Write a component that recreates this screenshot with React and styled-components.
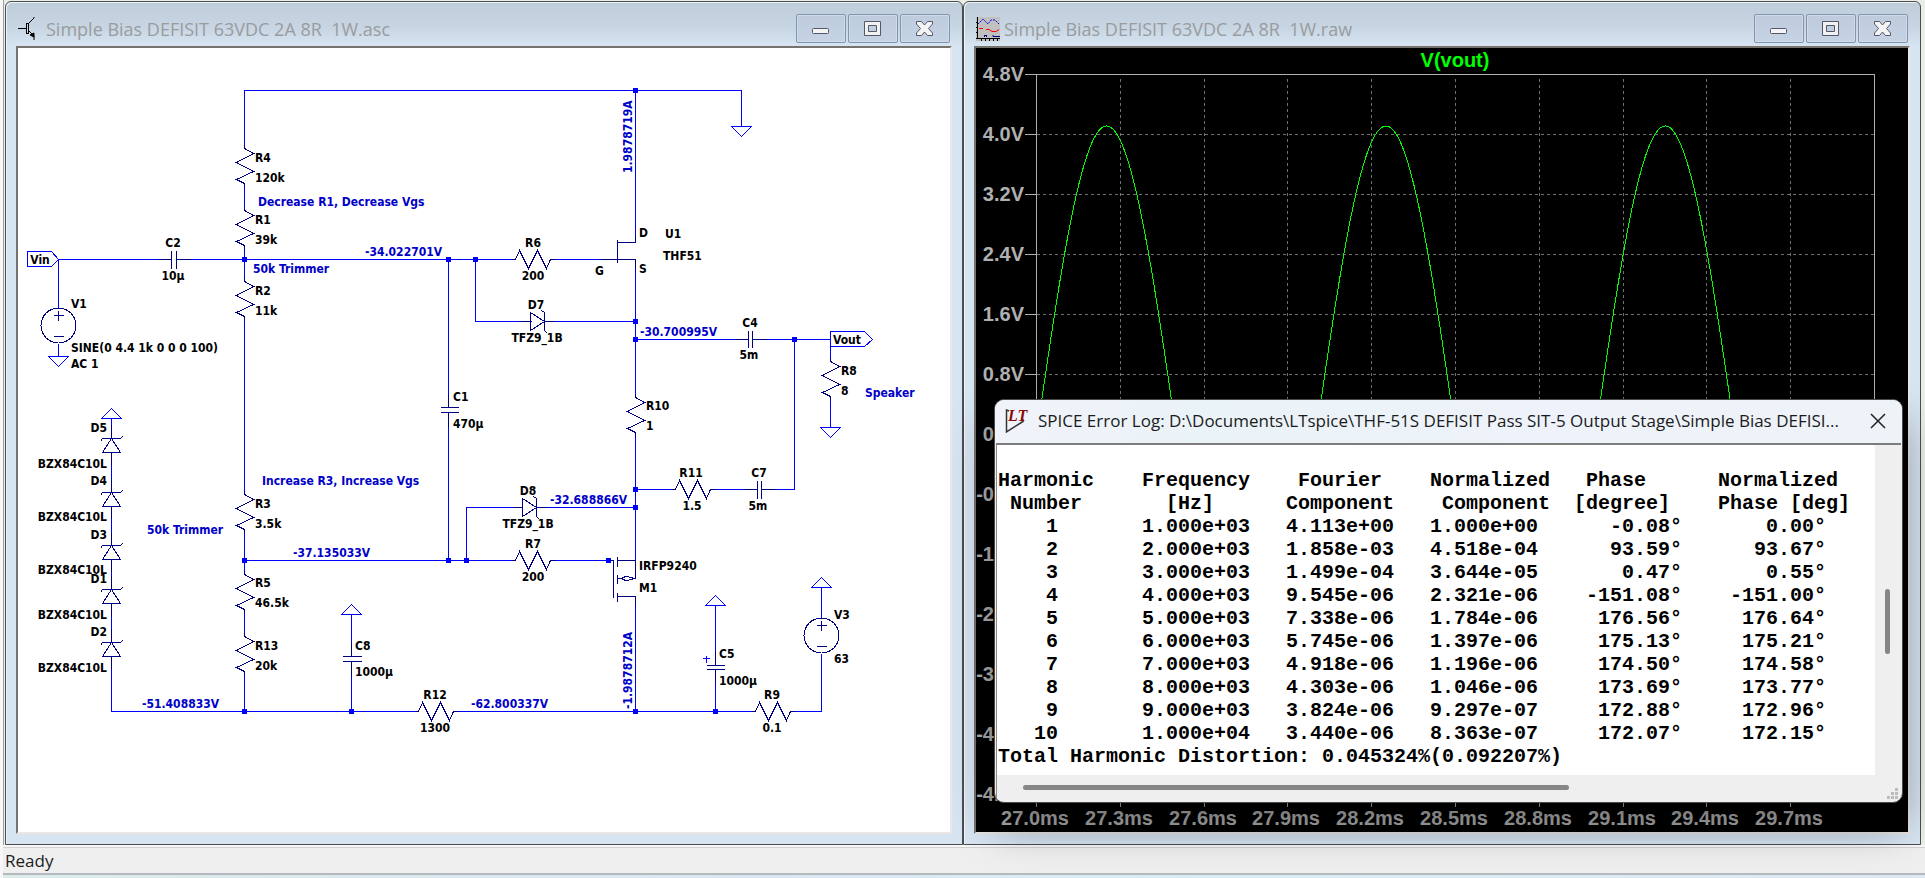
import React from "react"
import styled, { createGlobalStyle } from "styled-components"

const GlobalStyle = createGlobalStyle`
  * {
    box-sizing: border-box;
  }

  body {
    margin: 0;
    background-color: #f4f4f2;
    font-family: "Open Sans", "Noto Sans", sans-serif;
  }
`

/* ---------- shell ---------- */

const Shell = styled.div`
  position: relative;
  display: flex;
  flex-direction: column;
  min-height: 100vh;
  overflow: hidden;
  background-color: #f7f7f7;
`

const Desktop = styled.main`
  flex: 1;
  display: grid;
  grid-template-columns: 1fr 1fr;
  margin: 0 0 2px 3px;
  padding: 1px 4px 0 1px;
  border-left: 1px solid #a0a0a0;
  background-color: #e9efe6;
`

const StatusBar = styled.footer`
  display: flex;
  align-items: center;
  height: 28px;
  margin-left: 3px;
  padding-left: 2px;
  border-top: 1px solid #d2d2d2;
  border-bottom: 2px solid #b2bac0;
  background-color: #efefef;
  color: #1c1c1c;
  font-size: 17px;
  line-height: 24px;
`

const BottomStrip = styled.div`
  height: 3px;
  margin-left: 3px;
  background: linear-gradient(90deg, #dcebea, #dce6f2 40%, #d9edf4 60%, #dfe7f1);
`

/* ---------- child windows ---------- */

const Frame = styled.section`
  display: flex;
  flex-direction: column;
  min-width: 0;
  padding: 0 10px 10px;
  border: 1px solid #4b4d50;
  border-radius: 6px 6px 0 0;
  box-shadow: inset 1px 1px 0 #eef3f8;
  background: linear-gradient(#bfccda, #c8d5e2 26px, #d7e4f2 44px);
`

const TitleBar = styled.header`
  display: flex;
  align-items: center;
  gap: 4px;
  height: 44px;
  padding: 9px 2px 0;
`

const Title = styled.h2`
  flex: 1;
  min-width: 0;
  margin: 0;
  overflow: hidden;
  color: #999c9f;
  font-size: 18px;
  font-weight: 400;
  line-height: 24px;
  white-space: pre;
`

const Buttons = styled.div`
  display: flex;
  gap: 2px;
`

const FrameButton = styled.button`
  display: flex;
  align-items: center;
  justify-content: center;
  width: 50px;
  height: 29px;
  padding: 0;
  border: 1px solid #8494b0;
  border-radius: 2px;
  box-shadow: inset 0 0 0 1px #cfdaea;
  background: linear-gradient(#bdcbdd, #c6d3e4);
`

const Client = styled.div`
  flex: 1;
  border: 2px solid;
  border-color: #76736f #ebe7e7 #ebe7e7 #76736f;
  background-color: ${({ $dark }) => ($dark ? "black" : "white")};

  > svg {
    display: block;
    width: 100%;
    height: auto;
  }
`

const Glyph = styled.svg`
  flex: none;
  display: block;
  overflow: visible;
`

function Window({ title, icon, dark, children }) {
  return (
    <Frame>
      <TitleBar>
        {icon}
        <Title>{title}</Title>
        <Buttons>
          <FrameButton type="button" aria-label="Minimize">
            <Glyph width="20" height="18">
              <g transform="translate(-.5 -.5)">
                <rect x="2" y="9" width="16" height="5" rx="1" fill="#f4f4f4" stroke="#555868" />
              </g>
            </Glyph>
          </FrameButton>
          <FrameButton type="button" aria-label="Maximize">
            <Glyph width="20" height="18">
              <g transform="translate(-.5 -.5)">
                <path
                  d="M2 2h16v14H2zM6 6v6h8V6z"
                  fill="#f1f1f1"
                  fillRule="evenodd"
                  stroke="#555868"
                />
              </g>
            </Glyph>
          </FrameButton>
          <FrameButton type="button" aria-label="Close">
            <Glyph width="20" height="18">
              <g transform="translate(-.5 -.5)">
                <path
                  d="M2 2h5l3 3.500l3-3.500h5v2.500l-4 4.500l4 4.500v2.500h-5l-3-3.500l-3 3.500h-5v-2.500l4-4.500l-4-4.500z"
                  fill="#f4f4f4"
                  stroke="#555868"
                  strokeLinejoin="round"
                />
              </g>
            </Glyph>
          </FrameButton>
        </Buttons>
      </TitleBar>
      <Client $dark={dark}>{children}</Client>
    </Frame>
  )
}

const SchematicIcon = () => (
  <Glyph width="24" height="24" fill="none" stroke="black">
    <path d="M0 11.500h8" />
    <path d="M8.500 6v11M10.500 6v11M8 6.500h3M8 16.500h3" />
    <path d="M11 6l5-5v-1M11 14l5 5v4" />
    <path d="M12 18l4-2v4z" fill="black" />
  </Glyph>
)

const WaveformIcon = () => (
  <Glyph width="24" height="24" fill="none">
    <rect width="24" height="24" fill="#c0c0c0" />
    <path d="M2 7l5-5l5 5l3-4h4l4 4" stroke="#0000e0" strokeDasharray="2 1" />
    <path d="M3 11.500h4M10 12.500h3l3 2h4l3-2" stroke="red" />
    <path d="M8 18.500h3M8.500 18v2M10.500 18v2M17 18v1.500h7" stroke="#000080" />
    <path d="M1.500 0v22M0 21.500h24M0 5.500h2M0 10.500h2M0 15.500h2" stroke="black" />
    <path d="M5.500 21v3M9.500 21v3M13.500 21v3M17.500 21v3M21.500 21v3" stroke="black" />
  </Glyph>
)

/* ---------- schematic ---------- */

const WIRE = "#0000ff"
const PART = "#000080"

const Label = styled.text`
  font-family: "DejaVu Sans Condensed", "DejaVu Sans", sans-serif;
  font-size: 12px;
  font-weight: 700;
  fill: ${({ $note }) => ($note ? "#0000c8" : "black")};
`

const WIRES = [
  "M244 145V90H741V126",
  "M635 90V240",
  "M244 183V210M244 245V281M244 316V494M244 529V574M244 609V636M244 671V711",
  "M58 259H171M176 259H515M551 259H610",
  "M58 259V307M58 343V356",
  "M448 259V407M448 412V560",
  "M475 259V321H531M544 321H635",
  "M635 264V397M635 432V560",
  "M635 339H748M752 339H830V361M830 396V427",
  "M794 339V489H761M757 489H711M675 489H635",
  "M466 560V507H522M536 507H635",
  "M244 560H515M551 560H608",
  "M635 601V711",
  "M111 418V438M111 452V492M111 505V545M111 558V589M111 602V642M111 656V711H418",
  "M454 711H755M791 711H821V653M821 618V587",
  "M351 711V661M351 656V614",
  "M715 711V669M715 665V605",
  "M27 251H51L58 259L51 266H27Z",
  "M830 331H864L872 339L864 346H830Z",
]

const NODES = [
  [635, 90], [244, 259], [448, 259], [475, 259], [635, 321], [635, 339], [794, 339],
  [635, 489], [635, 507], [244, 560], [448, 560], [466, 560], [608, 560],
  [244, 711], [351, 711], [635, 711], [715, 711],
]

const RESISTORS = [
  [244, 144], [244, 206], [244, 277], [244, 490], [244, 570], [244, 632],
  [635, 393], [830, 357],
]

const FLAT_RESISTORS = [[515, 259], [515, 560], [675, 489], [418, 711], [755, 711]]

const GROUNDS_DOWN = [[741, 126], [58, 356], [830, 427]]
const GROUNDS_UP = [[111, 418], [351, 614], [715, 605], [821, 587]]

const ZENERS = [438, 492, 545, 589, 642]
const FLAT_ZENERS = [[530, 321], [522, 507]]

const SOURCES = [[58, 325], [821, 635]]

// [text, x, baseline, anchor]
const LABELS = [
  ["R4", 255, 162], ["120k", 255, 182],
  ["R1", 255, 224], ["39k", 255, 244],
  ["R2", 255, 295], ["11k", 255, 315],
  ["R3", 255, 508], ["3.5k", 255, 528],
  ["R5", 255, 587], ["46.5k", 255, 607],
  ["R13", 255, 650], ["20k", 255, 670],
  ["C2", 173, 247, "middle"], ["10µ", 173, 280, "middle"],
  ["Vin", 40, 264, "middle"], ["V1", 71, 308],
  ["SINE(0 4.4 1k 0 0 0 100)", 71, 352], ["AC 1", 71, 368],
  ["D5", 107, 432, "end"], ["BZX84C10L", 107, 468, "end"],
  ["D4", 107, 485, "end"], ["BZX84C10L", 107, 521, "end"],
  ["D3", 107, 539, "end"], ["BZX84C10L", 107, 574, "end"],
  ["D1", 107, 583, "end"], ["BZX84C10L", 107, 619, "end"],
  ["D2", 107, 636, "end"], ["BZX84C10L", 107, 672, "end"],
  ["C1", 453, 401], ["470µ", 453, 428],
  ["C8", 355, 650], ["1000µ", 355, 676],
  ["R12", 435, 699, "middle"], ["1300", 435, 732, "middle"],
  ["D", 639, 237], ["U1", 665, 238], ["THF51", 663, 260], ["S", 639, 273], ["G", 595, 275],
  ["R6", 533, 247, "middle"], ["200", 533, 280, "middle"],
  ["D7", 536, 309, "middle"], ["TFZ9_1B", 537, 342, "middle"],
  ["C4", 750, 327, "middle"], ["5m", 749, 359, "middle"],
  ["Vout", 833, 344], ["R8", 841, 375], ["8", 841, 395],
  ["R10", 646, 410], ["1", 646, 430],
  ["R11", 691, 477, "middle"], ["1.5", 692, 510, "middle"],
  ["C7", 759, 477, "middle"], ["5m", 758, 510, "middle"],
  ["D8", 528, 495, "middle"], ["TFZ9_1B", 528, 528, "middle"],
  ["R7", 533, 548, "middle"], ["200", 533, 581, "middle"],
  ["IRFP9240", 639, 570], ["M1", 639, 592],
  ["C5", 719, 658], ["1000µ", 719, 685],
  ["R9", 772, 699, "middle"], ["0.1", 772, 732, "middle"],
  ["V3", 834, 619], ["63", 834, 663],
]

const NOTES = [
  ["Decrease R1, Decrease Vgs", 258, 206],
  ["Increase R3, Increase Vgs", 262, 485],
  ["50k Trimmer", 253, 273],
  ["50k Trimmer", 147, 534],
  ["Speaker", 865, 397],
  ["-34.022701V", 365, 256],
  ["-37.135033V", 293, 557],
  ["-51.408833V", 142, 708],
  ["-62.800337V", 471, 708],
  ["-30.700995V", 640, 336],
  ["-32.688866V", 550, 504],
]

// branch currents, written upwards along the wire
const CURRENTS = [
  ["1.9878719A", 632, 173],
  ["-1.9878712A", 632, 709],
]

function Schematic() {
  return (
    <svg viewBox="18 48 932 784" role="img" aria-label="Schematic">
      <g transform="translate(.5 .5)" fill="none" shapeRendering="crispEdges">
        <g stroke={WIRE}>
          {WIRES.map((d) => (
            <path key={d} d={d} />
          ))}
          {GROUNDS_DOWN.map(([x, y]) => (
            <path key={x} d={`M${x - 10} ${y}h20l-10 10z`} />
          ))}
          {GROUNDS_UP.map(([x, y]) => (
            <path key={x} d={`M${x - 10} ${y}h20l-10 -10z`} />
          ))}
        </g>
        <g stroke={PART}>
          {RESISTORS.map(([x, y]) => (
            <path key={`${x}-${y}`} d={`M${x} ${y}v4l9 5l-17 9l17 9l-17 8l8 4v4`} />
          ))}
          {FLAT_RESISTORS.map(([x, y]) => (
            <path key={`${x}-${y}`} d={`M${x - 4} ${y}h4l4 -9l9 18l9 -18l9 18l4 -9h5`} />
          ))}
          {ZENERS.map((y) => (
            <path
              key={y}
              d={`M100 ${y + 3}l2 -3h18l2 -2M111 ${y}l-9 14h18zM111 ${y}v-14M111 ${y + 14}v12`}
            />
          ))}
          {FLAT_ZENERS.map(([x, y]) => (
            <path
              key={x}
              d={`M${x} ${y - 9}v18l14 -9zM${x + 11} ${y - 11}l3 2v18l3 3M${x} ${y}h-10M${x + 14} ${y}h10`}
            />
          ))}
          {SOURCES.map(([x, y]) => (
            <g key={x}>
              <circle cx={x} cy={y} r="17.500" />
              <path d={`M${x - 5} ${y - 10}h10M${x} ${y - 15}v10M${x - 5} ${y + 11}h10`} />
            </g>
          ))}
          {/* capacitors */}
          <path d="M171 250v18M176 250v18M157 259h14M176 259h14" />
          <path d="M748 330v17M752 330v17M734 339h14M752 339h14" />
          <path d="M757 480v18M761 480v18M743 489h14M761 489h14" />
          <path d="M440 407h18M440 412h18M448 394v13M448 412v14" />
          <path d="M342 656h19M342 661h19M351 642v14M351 661v14" />
          <path d="M706 665h18M706 669h18M715 651v14M715 669v14" />
          {/* U1 */}
          <path d="M617 239v23M635 235v7h-18M600 259h35v8" />
          {/* M1 */}
          <path d="M608 560h5v37M617 556v10M617 574v9M617 592v9M617 560h18v18h-4" />
          <path d="M617 578h4M621 578l4 -2l7 1v2l-7 1z" />
          <path d="M617 596h18v8" />
        </g>
        <path d="M702 658h7M706 655v7" stroke={WIRE} />
      </g>

      {NODES.map(([x, y]) => (
        <rect key={`${x}-${y}`} x={x - 2} y={y - 2} width="5" height="5" fill={WIRE} />
      ))}

      {LABELS.map(([text, x, y, anchor]) => (
        <Label key={`${x}-${y}`} x={x} y={y} textAnchor={anchor}>
          {text}
        </Label>
      ))}
      {NOTES.map(([text, x, y]) => (
        <Label key={`${x}-${y}`} x={x} y={y} $note>
          {text}
        </Label>
      ))}
      {CURRENTS.map(([text, x, y]) => (
        <Label key={y} transform={`translate(${x} ${y}) rotate(-90)`} $note>
          {text}
        </Label>
      ))}
    </svg>
  )
}

/* ---------- waveform plot ---------- */

const AxisText = styled.text`
  font-family: "Liberation Sans", Arial, sans-serif;
  font-size: 20px;
  font-weight: 700;
  fill: ${({ $trace }) => ($trace ? "#00ff00" : "#b0b0b0")};
`

const PLOT = { left: 1036, right: 1874, top: 74, bottom: 794 }
const ZERO = 434
const PX_PER_VOLT = 75
const PX_PER_MS = (PLOT.right - PLOT.left) / 3

const voltTicks = Array.from({ length: 13 }, (_, i) => ({
  y: PLOT.top + i * 60,
  text: `${((48 - i * 8) / 10).toFixed(1)}V`,
}))

const timeTicks = Array.from({ length: 10 }, (_, i) => ({
  x: Math.round(PLOT.left + i * 0.3 * PX_PER_MS),
  text: `${(27 + i * 0.3).toFixed(1)}ms`,
}))

const trace = Array.from({ length: PLOT.right - PLOT.left + 1 }, (_, i) => {
  const v = 4.113 * Math.sin(2 * Math.PI * (i / PX_PER_MS - 0.001))
  return `${PLOT.left + i},${(ZERO - v * PX_PER_VOLT).toFixed(1)}`
}).join(" ")

function Plot() {
  const { left, right, top, bottom } = PLOT

  return (
    <svg viewBox="976 48 932 784" role="img" aria-label="V(vout) over time">
      <g transform="translate(.5 .5)" fill="none" shapeRendering="crispEdges">
        <g stroke="#707070" strokeDasharray="3 3">
          {voltTicks.slice(1, -1).map(({ y }) => (
            <path key={y} d={`M${left} ${y}H${right}`} />
          ))}
          {timeTicks.slice(1).map(({ x }) => (
            <path key={x} d={`M${x} ${top + 4}V${bottom}`} />
          ))}
        </g>
        <g stroke="#b0b0b0">
          <path d={`M${left} ${top}H${right}V${bottom}H${left}Z`} />
          {voltTicks.map(({ y }) => (
            <path key={y} d={`M${left - 12} ${y}h12`} />
          ))}
          {timeTicks.map(({ x }) => (
            <path key={x} d={`M${x} ${bottom}v12`} />
          ))}
        </g>
        <polyline points={trace} stroke="#00ff00" />
      </g>

      <AxisText x={(left + right) / 2} y={67} textAnchor="middle" $trace>
        V(vout)
      </AxisText>
      {voltTicks.map(({ y, text }) => (
        <AxisText key={y} x={left - 12} y={y + 7} textAnchor="end">
          {text}
        </AxisText>
      ))}
      {timeTicks.map(({ x, text }) => (
        <AxisText key={x} x={x - 1} y={825} textAnchor="middle">
          {text}
        </AxisText>
      ))}
    </svg>
  )
}

/* ---------- error log dialog ---------- */

const Dialog = styled.div`
  position: absolute;
  top: 399px;
  right: 22px;
  left: 994px;
  overflow: hidden;
  border: 1px solid #4a4a4a;
  border-radius: 10px;
  box-shadow: 0 22px 44px rgba(0, 0, 0, 0.38);
  background-color: #efefef;
`

const DialogHeader = styled.header`
  display: flex;
  align-items: center;
  height: 43px;
  padding: 0 16px 2px 10px;
  background: linear-gradient(90deg, #f1f3fa, #eaf3f7 22%, #eef2fa 60%, #eef3f8);
`

const DialogTitle = styled.h2`
  flex: 1;
  min-width: 0;
  margin: 0 0 0 9px;
  overflow: hidden;
  color: #1b1b1b;
  font-size: 17px;
  font-weight: 400;
  line-height: 24px;
  white-space: nowrap;
`

const CloseButton = styled.button`
  display: flex;
  padding: 0;
  border: 0;
  background: none;
`

const LogGrid = styled.div`
  display: grid;
  grid-template-columns: 1fr 26px;
  grid-template-rows: auto 26px;
  margin: 0 1px 1px;
  border-top: 2px solid #7d7d7d;
  border-left: 1px solid #8a8a8a;
`

const Log = styled.div`
  padding: 24px 0 7px 1px;
  overflow: hidden;
  background-color: white;
  color: black;
  font-family: "Liberation Mono", "Courier New", monospace;
  font-size: 20px;
  font-weight: 700;
  line-height: 23px;
`

const HarmonicTable = styled.table`
  width: 864px;
  border-collapse: collapse;
  table-layout: fixed;

  th,
  td {
    padding: 0;
    white-space: pre;
  }

  th {
    text-align: left;
  }

  td {
    padding-right: 36px;
    text-align: right;
  }

  td:first-child {
    padding-right: 84px;
  }
`

const Total = styled.p`
  margin: 0;
`

const VTrack = styled.div`
  padding: 144px 0 0 10px;
`

const VThumb = styled.div`
  width: 5px;
  height: 65px;
  border-radius: 3px;
  background-color: #868686;
`

const HTrack = styled.div`
  padding: 10px 306px 0 26px;
`

const HThumb = styled.div`
  height: 5px;
  border-radius: 3px;
  background-color: #868686;
`

const Corner = styled.div`
  display: flex;
  align-items: flex-end;
  justify-content: flex-end;
  padding: 0 3px 2px 0;
`

const HEADINGS = [
  "Harmonic\n Number",
  "Frequency\n  [Hz]",
  " Fourier\nComponent",
  "Normalized\n Component",
  " Phase\n[degree]",
  "Normalized\nPhase [deg]",
]

const HARMONICS = [
  ["1", "1.000e+03", "4.113e+00", "1.000e+00", "-0.08°", "0.00°"],
  ["2", "2.000e+03", "1.858e-03", "4.518e-04", "93.59°", "93.67°"],
  ["3", "3.000e+03", "1.499e-04", "3.644e-05", "0.47°", "0.55°"],
  ["4", "4.000e+03", "9.545e-06", "2.321e-06", "-151.08°", "-151.00°"],
  ["5", "5.000e+03", "7.338e-06", "1.784e-06", "176.56°", "176.64°"],
  ["6", "6.000e+03", "5.745e-06", "1.397e-06", "175.13°", "175.21°"],
  ["7", "7.000e+03", "4.918e-06", "1.196e-06", "174.50°", "174.58°"],
  ["8", "8.000e+03", "4.303e-06", "1.046e-06", "173.69°", "173.77°"],
  ["9", "9.000e+03", "3.824e-06", "9.297e-07", "172.88°", "172.96°"],
  ["10", "1.000e+04", "3.440e-06", "8.363e-07", "172.07°", "172.15°"],
]

const LogoMark = styled.text`
  font-family: "Liberation Serif", serif;
  font-size: 16px;
  font-style: italic;
  font-weight: 700;
  fill: #8b0a0a;
`

function ErrorLog() {
  return (
    <Dialog role="dialog" aria-labelledby="log-title">
      <DialogHeader>
        <Glyph width="24" height="24" fill="none" stroke="#333">
          <path d="M4 2L1.500 1V23L18 12.500V10" strokeWidth="1.500" />
          <LogoMark x="3" y="12" stroke="none">
            LT
          </LogoMark>
        </Glyph>
        <DialogTitle id="log-title">
          {"SPICE Error Log: D:\\Documents\\LTspice\\THF-51S DEFISIT Pass SIT-5 Output Stage\\Simple Bias DEFISI..."}
        </DialogTitle>
        <CloseButton type="button" aria-label="Close log">
          <Glyph width="16" height="16" stroke="#222" strokeWidth="1.500">
            <path d="M1 1L15 15M15 1L1 15" />
          </Glyph>
        </CloseButton>
      </DialogHeader>
      <LogGrid>
        <Log>
          <HarmonicTable>
            <thead>
              <tr>
                {HEADINGS.map((text, i) => (
                  <th key={i} scope="col">
                    {text}
                  </th>
                ))}
              </tr>
            </thead>
            <tbody>
              {HARMONICS.map((row) => (
                <tr key={row[0]}>
                  {row.map((cell, i) => (
                    <td key={i}>{cell}</td>
                  ))}
                </tr>
              ))}
            </tbody>
          </HarmonicTable>
          <Total>Total Harmonic Distortion: 0.045324%(0.092207%)</Total>
        </Log>
        <VTrack>
          <VThumb />
        </VTrack>
        <HTrack>
          <HThumb />
        </HTrack>
        <Corner>
          <Glyph width="11" height="11" fill="#bcbcbc">
            <path d="M8 0h3v3h-3zM4 4h3v3h-3zM8 4h3v3h-3zM0 8h3v3h-3zM4 8h3v3h-3zM8 8h3v3h-3z" />
          </Glyph>
        </Corner>
      </LogGrid>
    </Dialog>
  )
}

export default function App() {
  return (
    <>
      <GlobalStyle />
      <Shell>
        <Desktop>
          <Window title="Simple Bias DEFISIT 63VDC 2A 8R  1W.asc" icon={<SchematicIcon />}>
            <Schematic />
          </Window>
          <Window title="Simple Bias DEFISIT 63VDC 2A 8R  1W.raw" icon={<WaveformIcon />} dark>
            <Plot />
          </Window>
        </Desktop>
        <StatusBar>Ready</StatusBar>
        <BottomStrip />
        <ErrorLog />
      </Shell>
    </>
  )
}
